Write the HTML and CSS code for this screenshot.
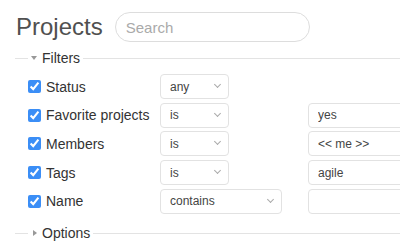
FILE: index.html
```html
<!DOCTYPE html>
<html lang="en">
<head>
  <meta charset="UTF-8" />
  <title>Projects</title>
  <link rel="stylesheet" href="styles.css">
</head>
<body>
  <div class="page">
    <div class="header">
      <h1>Projects</h1>
      <input class="search" type="text" placeholder="Search" />
    </div>

    <div class="group">
      <div class="group-head"><span class="arrow down"></span>Filters</div>
      <div class="filters">
        <div class="filter">
          <label class="field"><input type="checkbox" checked />Status</label>
          <span class="select"><select><option>any</option></select></span>
        </div>
        <div class="filter">
          <label class="field"><input type="checkbox" checked />Favorite projects</label>
          <span class="select"><select><option>is</option></select></span>
          <input class="value" type="text" value="yes" />
        </div>
        <div class="filter">
          <label class="field"><input type="checkbox" checked />Members</label>
          <span class="select"><select><option>is</option></select></span>
          <input class="value" type="text" value="<< me >>" />
        </div>
        <div class="filter">
          <label class="field"><input type="checkbox" checked />Tags</label>
          <span class="select"><select><option>is</option></select></span>
          <input class="value" type="text" value="agile" />
        </div>
        <div class="filter">
          <label class="field"><input type="checkbox" checked />Name</label>
          <span class="select wide"><select><option>contains</option></select></span>
          <input class="value" type="text" value="" />
        </div>
      </div>
    </div>

    <div class="group">
      <div class="group-head"><span class="arrow right"></span>Options</div>
    </div>
  </div>
</body>
</html>
```

FILE: styles.css
```css
html, body {
  margin: 0;
  overflow: hidden;
}
body {
  font-family: "Liberation Sans", Arial, sans-serif;
  color: #333;
  background: #fff;
}
.page {
  padding: 12px 0 0 15px;
}
.header {
  display: flex;
  align-items: center;
}
h1 {
  margin: 0 0 0 1px;
  font-size: 24px;
  font-weight: normal;
  line-height: 30px;
  color: #505050;
}
.search {
  box-sizing: border-box;
  width: 195px;
  height: 30px;
  margin-left: 12px;
  padding: 0 10px;
  border: 1px solid #ddd;
  border-radius: 15px;
  font-family: inherit;
  font-size: 15px;
  color: #333;
  outline: none;
}
.search::placeholder {
  color: #aaa;
}
.group-head {
  display: flex;
  align-items: center;
  margin-top: 8px;
  font-size: 14px;
  line-height: 16px;
  color: #333;
}
.group-head::before,
.group-head::after {
  content: "";
  height: 1px;
  background: #e3e3e3;
}
.group-head::before {
  width: 13px;
  margin-right: 3px;
}
.group-head::after {
  flex: 1;
  margin-left: 3px;
}
.arrow {
  width: 0;
  height: 0;
  margin-right: 5px;
}
.arrow.down {
  border-left: 3px solid transparent;
  border-right: 3px solid transparent;
  border-top: 4px solid #999;
}
.arrow.right {
  margin-left: 2px;
  border-top: 3px solid transparent;
  border-bottom: 3px solid transparent;
  border-left: 4px solid #999;
}
.filters {
  margin: 8px 0 11.5px 13px;
}
.filter {
  display: grid;
  grid-template-columns: 132px 148px 150px;
  align-items: center;
  height: 25px;
  margin-bottom: 3.7px;
}
.field {
  display: flex;
  align-items: center;
  font-size: 14px;
  color: #333;
}
.field input {
  width: 13px;
  height: 13px;
  margin: 0 5px 0 0;
  accent-color: #3b8ef6;
}
.select {
  position: relative;
  width: 69px;
}
.select.wide {
  width: 122px;
}
.select select {
  box-sizing: border-box;
  width: 100%;
  height: 25px;
  padding: 0 9px;
  border: 1px solid #e2e2e2;
  border-radius: 4px;
  background: #fff;
  font-family: inherit;
  font-size: 12px;
  color: #444;
  appearance: none;
  outline: none;
}
.select::after {
  content: "";
  position: absolute;
  right: 9px;
  top: 8px;
  width: 4px;
  height: 4px;
  border-right: 1.3px solid #aaa;
  border-bottom: 1.3px solid #aaa;
  transform: rotate(45deg);
  pointer-events: none;
}
.value {
  box-sizing: border-box;
  width: 150px;
  height: 25px;
  padding: 0 9px;
  border: 1px solid #e2e2e2;
  border-radius: 4px;
  font-family: inherit;
  font-size: 12px;
  color: #444;
  outline: none;
}
```
